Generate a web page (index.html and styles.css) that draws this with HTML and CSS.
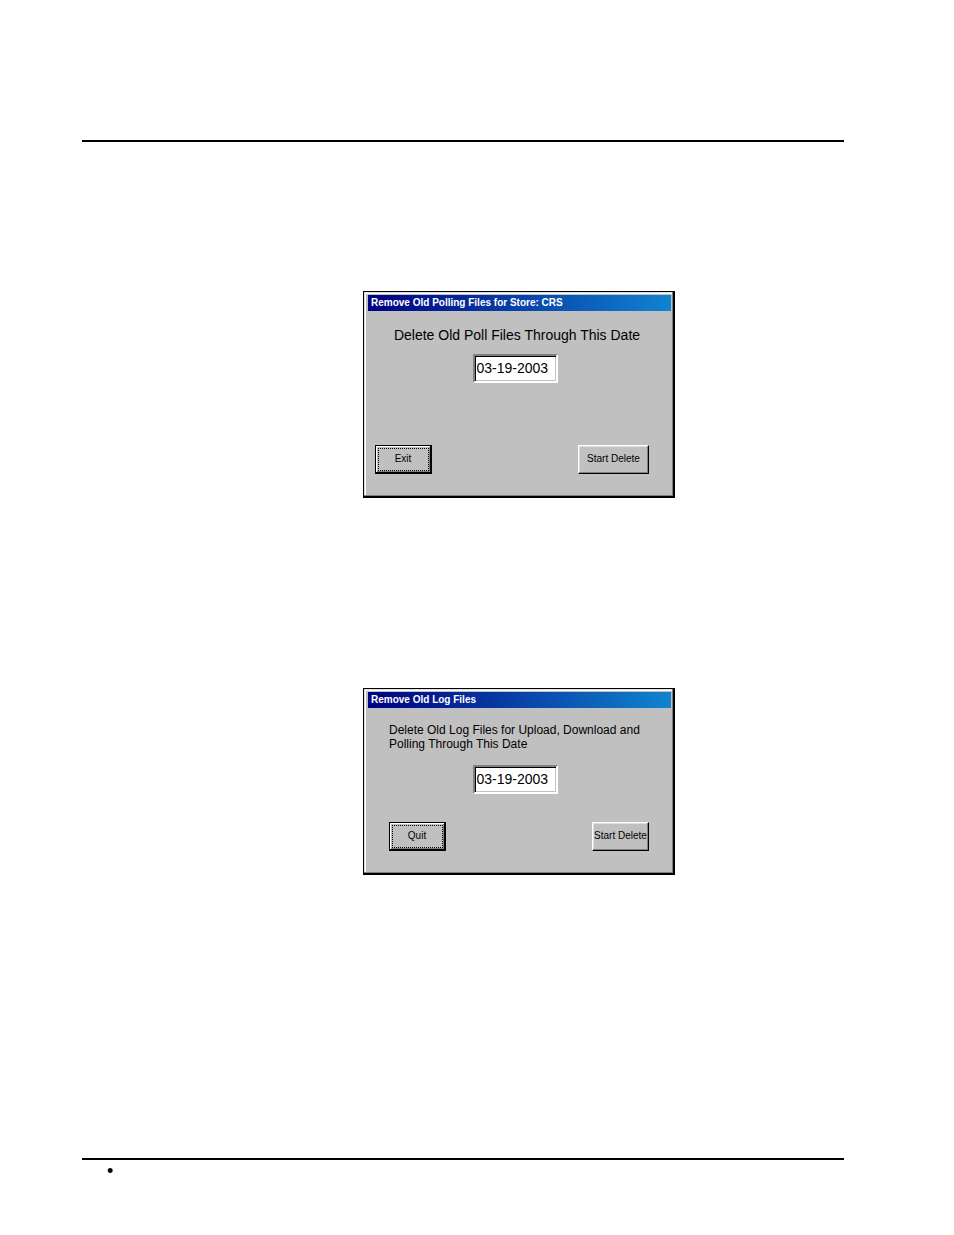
FILE: index.html
```html
<!DOCTYPE html>
<html lang="en">
<head>
  <meta charset="UTF-8" />
  <meta name="viewport" content="width=device-width, initial-scale=1.0"/>
  <title>Remove Old Files</title>
  <link rel="stylesheet" href="styles.css">
</head>
<body>
  <header class="page-header"></header>

  <main class="page-content">
    <form class="dialog">
      <h2 class="title-bar">Remove Old Polling Files for Store: CRS</h2>
      <div class="dialog-body poll">
        <label class="prompt" for="pollDate">Delete Old Poll Files Through This Date</label>
        <input type="text" class="date" id="pollDate" value="03-19-2003" />
        <div class="buttons">
          <button type="button" class="default">Exit</button>
          <button type="button" class="wide">Start Delete</button>
        </div>
      </div>
    </form>

    <form class="dialog">
      <h2 class="title-bar">Remove Old Log Files</h2>
      <div class="dialog-body log">
        <label class="prompt" for="logDate">Delete Old Log Files for Upload, Download and Polling Through This Date</label>
        <input type="text" class="date" id="logDate" value="03-19-2003" />
        <div class="buttons">
          <button type="button" class="default">Quit</button>
          <button type="button">Start Delete</button>
        </div>
      </div>
    </form>
  </main>

  <footer class="page-footer">&bull;</footer>
</body>
</html>
```

FILE: styles.css
```css
* {
  box-sizing: border-box;
  margin: 0;
  padding: 0;
}

body {
  font-family: "Liberation Sans", Arial, sans-serif;
  background: #fff;
  color: #000;
  min-height: 100vh;
  display: flex;
  flex-direction: column;
  padding: 0 110px 0 82px;
}

.page-header {
  height: 142px;
  border-bottom: 2px solid #000;
}

.page-content {
  flex: 1;
  display: flex;
  flex-direction: column;
  align-items: flex-start;
  gap: 190px;
  padding: 149px 0 100px 281px;
}

.page-footer {
  height: 77px;
  border-top: 2px solid #000;
  padding-left: 25px;
  font-size: 18px;
  line-height: 22px;
}

/* Dialog windows */
.dialog {
  width: 312px;
  background: #c0c0c0;
  border: solid #000;
  border-width: 1px 2px 2px 1px;
  padding: 3px 2px 0 4px;
  box-shadow: inset -1px -1px #808080, inset 1px 1px #dfdfdf, inset 2px 2px #fff;
}

.title-bar {
  height: 16px;
  padding-left: 3px;
  background: linear-gradient(to right, #000080, #1084d0);
  color: #fff;
  font-size: 10px;
  font-weight: bold;
  line-height: 16px;
}

.dialog-body {
  display: flex;
  flex-direction: column;
  align-items: center;
}

.poll {
  padding: 14px 12px 22px 7px;
}

.poll .prompt {
  font-size: 14px;
  line-height: 20px;
  margin-bottom: 9px;
}

.poll .date {
  margin-right: 4px;
}

.poll .buttons {
  margin-top: 62px;
}

.log {
  padding: 15px 12px 22px 21px;
}

.log .prompt {
  width: 100%;
  font-size: 12px;
  line-height: 14px;
  margin-bottom: 14px;
}

.log .date {
  margin-right: 18px;
}

.log .buttons {
  margin-top: 28px;
}

.date {
  width: 85px;
  height: 29px;
  padding: 0 0 2px 2px;
  border: 2px solid;
  border-color: #808080 #fff #fff #808080;
  border-radius: 0;
  box-shadow: inset 1px 1px #000, inset -1px -1px #c0c0c0;
  background: #fff;
  font-family: inherit;
  font-size: 14px;
}

.buttons {
  width: 100%;
  display: flex;
  justify-content: space-between;
  padding-right: 10px;
}

button {
  width: 57px;
  height: 29px;
  padding-bottom: 2px;
  background: #c0c0c0;
  border: 1px solid;
  border-color: #fff #000 #000 #fff;
  box-shadow: inset -1px -1px #808080, inset 1px 1px #dfdfdf;
  color: #000;
  font-family: inherit;
  font-size: 10px;
  white-space: nowrap;
}

.wide {
  width: 71px;
}

.default {
  border: solid #000;
  border-width: 1px 2px 2px 1px;
  box-shadow: inset 1px 1px #fff, inset -1px -1px #808080;
  outline: 1px dotted #000;
  outline-offset: -4px;
}
```
